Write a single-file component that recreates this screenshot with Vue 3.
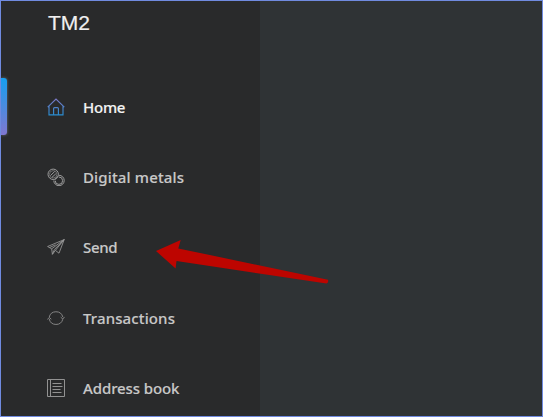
<script setup>
const items = [
  { id: 'home', label: 'Home' },
  { id: 'metals', label: 'Digital metals' },
  { id: 'send', label: 'Send' },
  { id: 'transactions', label: 'Transactions' },
  { id: 'book', label: 'Address book' },
]
</script>

<template>
  <div class="shell">
    <aside class="sidebar">
      <header class="brand">TM2</header>
      <nav class="menu">
        <a v-for="item in items" :key="item.id" class="item" :class="[item.id, { active: item.id === 'home' }]">
          <svg class="icon" viewBox="0 0 18 18" fill="none">
            <g v-if="item.id === 'home'" stroke="url(#homeGradient)" stroke-width="1.15">
              <path d="M.7 9.2 9 1l8.3 8.2M2 8v8.9h14V8M6.6 16.8v-6.2q0-1 1-1h2.8q1 0 1 1v6.2" />
            </g>
            <g v-else-if="item.id === 'metals'" stroke="#9c9c9c" stroke-width="1">
              <circle cx="6.2" cy="6.3" r="5.2" />
              <circle cx="6.2" cy="6.3" r="3.7" stroke="#6d6d6d" />
              <path d="m3.5 7.5 4.2-4M5 9.3l3.8-3.5" />
              <path d="M12 7.3a5.2 5.2 0 1 1-5.2 5.2M11.8 9a3.7 3.7 0 1 1-3.6 3.7M8 11.3l3.2-3" />
            </g>
            <g v-else-if="item.id === 'send'" stroke="#999" stroke-width=".85" stroke-linejoin="round">
              <path d="M.6 8.5 17.2 1.6 12 15.2l-3.6-2.8-3 3.9-.7-5.5ZM4.7 10.8 17.2 1.6 8.4 12.4M5.4 16.3l2-4.8 9.8-9.9M2.5 9.6l6-2.8" />
            </g>
            <g v-else-if="item.id === 'transactions'" stroke="#858585" stroke-width="1">
              <path d="M2.2 8.2A7 7 0 0 1 15.8 8M15.8 10.2A7 7 0 0 1 2.2 10" />
              <path d="m.4 10.5 1.8-2 2.1 1.7M13.7 8.2l2.1 1.8 1.7-2.1" />
            </g>
            <g v-else stroke="#929292" stroke-width="1">
              <path d="M.5.5h17v17H.5ZM3.5.5v17M5.5 4.5h9M5.5 7.5h10M5.5 10.5h8M5.5 13.5h9" />
            </g>
            <defs>
              <linearGradient id="homeGradient" gradientUnits="userSpaceOnUse" x1="0" y1="0" x2="0" y2="18">
                <stop stop-color="#8077c5" />
                <stop offset="1" stop-color="#238ed1" />
              </linearGradient>
            </defs>
          </svg>
          <span class="label">{{ item.label }}</span>
        </a>
      </nav>
    </aside>
    <main class="content"></main>
    <svg class="pointer" viewBox="0 0 185 60">
      <path d="M6 21 30.7 10 28.3 18.4 178 49.7Q179 52 176.5 53.5L26.5 31 25.6 38.6Z" />
    </svg>
  </div>
</template>

<style>
body {
  margin: 0;
}
</style>

<style scoped>
.shell {
  position: relative;
  display: flex;
  box-sizing: border-box;
  width: 543px;
  height: 417px;
  overflow: hidden;
  border: 1px solid #708be0;
  background: #2f3335;
}
.sidebar {
  width: 259px;
  flex: none;
  background: #292a2b;
}
.content {
  flex: 1;
}
.brand {
  box-sizing: border-box;
  height: 71px;
  padding: 9px 0 0 47px;
  color: #f0f0f0;
  font: 21px/26px "Liberation Sans", sans-serif;
  -webkit-text-stroke: 0.2px;
}
.menu {
  display: flex;
  flex-direction: column;
}
.item {
  position: relative;
  display: flex;
  align-items: center;
  gap: 18px;
  flex: none;
  height: 70px;
  padding-left: 46px;
  color: #c8c8c8;
  font: 500 15px/24px "Noto Sans", sans-serif;
}
.home {
  letter-spacing: -0.25px;
}
.metals {
  letter-spacing: 0.15px;
}
.send {
  letter-spacing: -0.3px;
}
.transactions {
  margin-top: 1px;
  letter-spacing: 0.12px;
}
.book {
  letter-spacing: -0.1px;
}
.active {
  color: #f3f3f3;
}
.active::before {
  content: "";
  position: absolute;
  left: 0;
  top: 6px;
  width: 6px;
  height: 57px;
  border-radius: 0 3px 3px 0;
  background: linear-gradient(#169fef, #8077d0);
  box-shadow: 0 0 3px #68737c;
}
.icon {
  width: 18px;
  height: 18px;
  flex: none;
}
.label {
  white-space: nowrap;
  -webkit-text-stroke: 0.15px;
}
.pointer {
  position: absolute;
  left: 149px;
  top: 229px;
  width: 185px;
  height: 60px;
  fill: #bd0500;
}
</style>
